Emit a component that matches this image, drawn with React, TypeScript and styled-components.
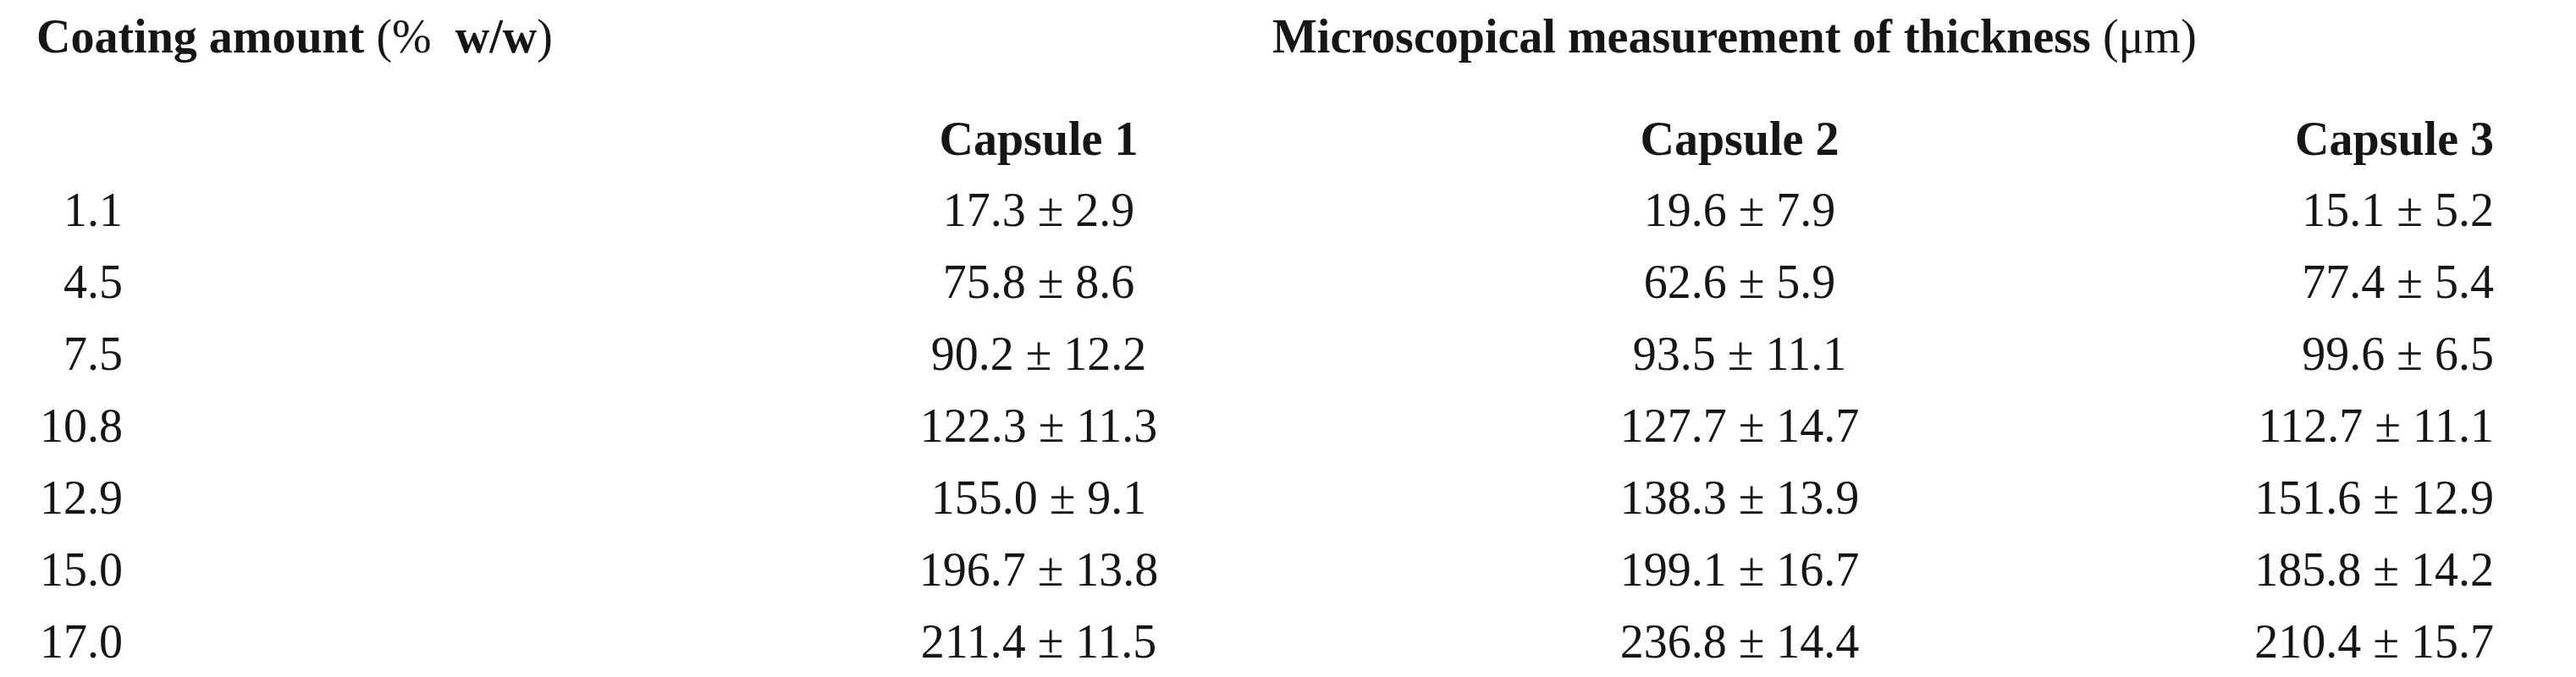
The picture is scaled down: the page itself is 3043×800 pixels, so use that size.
import * as React from 'react';
import styled, { createGlobalStyle } from 'styled-components';

const GlobalStyle = createGlobalStyle`
    html, body {
        margin: 0;
        padding: 0;
        background: #fff;
    }
    body {
        width: 3043px;
        font-family: "Liberation Serif", "Times New Roman", serif;
        color: #161616;
    }
`;

type Row = {
    amount: string;
    values: [string, string, string];
}

const rows: Row[] = [
    { amount: '1.1', values: ['17.3 ± 2.9', '19.6 ± 7.9', '15.1 ± 5.2'] },
    { amount: '4.5', values: ['75.8 ± 8.6', '62.6 ± 5.9', '77.4 ± 5.4'] },
    { amount: '7.5', values: ['90.2 ± 12.2', '93.5 ± 11.1', '99.6 ± 6.5'] },
    { amount: '10.8', values: ['122.3 ± 11.3', '127.7 ± 14.7', '112.7 ± 11.1'] },
    { amount: '12.9', values: ['155.0 ± 9.1', '138.3 ± 13.9', '151.6 ± 12.9'] },
    { amount: '15.0', values: ['196.7 ± 13.8', '199.1 ± 16.7', '185.8 ± 14.2'] },
    { amount: '17.0', values: ['211.4 ± 11.5', '236.8 ± 14.4', '210.4 ± 15.7'] },
];

const Table = styled.div`
    display: grid;
    grid-template-columns: 804px 846px 810px 486px;
    grid-template-rows: 121px 84px repeat(7, 85px);
    align-items: start;
    font-size: 56px;
    line-height: 86px;
    white-space: nowrap;
`;

const TopHeader = styled.div<{ $span?: boolean }>`
    font-weight: bold;
    grid-column: ${p => (p.$span ? '2 / 5' : 'auto')};
    padding-left: ${p => (p.$span ? '699px' : '43px')};
`;

const Light = styled.span`
    font-weight: normal;
`;

const Cell = styled.div<{ $align: 'center' | 'right' }>`
    text-align: ${p => p.$align};
`;

const HeadCell = styled(Cell)`
    font-weight: bold;
`;

const Amount = styled.div`
    padding-left: 40px;
`;

const AmountValue = styled.span`
    display: inline-block;
    width: 105px;
    text-align: right;
`;

const align = (i: number): 'center' | 'right' => (i === 2 ? 'right' : 'center');

const App: React.FC = () => {
    return (
        <>
            <GlobalStyle />
            <Table>
                <TopHeader>
                    Coating amount <Light>(%</Light>&nbsp; w/w<Light>)</Light>
                </TopHeader>
                <TopHeader $span>
                    Microscopical measurement of thickness <Light>(μm)</Light>
                </TopHeader>

                <div />
                {['Capsule 1', 'Capsule 2', 'Capsule 3'].map((c, i) => (
                    <HeadCell key={c} $align={align(i)}>{c}</HeadCell>
                ))}

                {rows.map(r => (
                    <React.Fragment key={r.amount}>
                        <Amount><AmountValue>{r.amount}</AmountValue></Amount>
                        {r.values.map((v, i) => (
                            <Cell key={i} $align={align(i)}>{v}</Cell>
                        ))}
                    </React.Fragment>
                ))}
            </Table>
        </>
    );
}

export default App;
